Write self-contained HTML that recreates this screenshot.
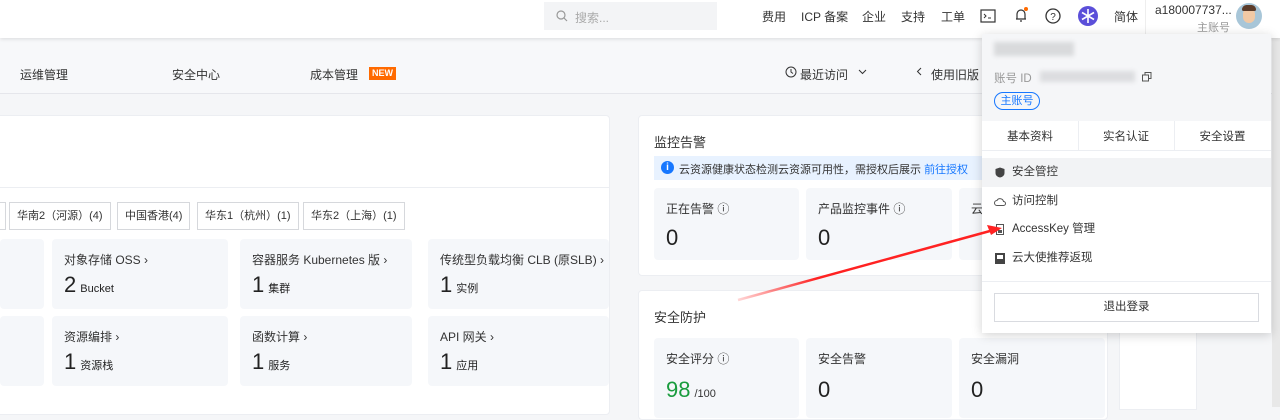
<!DOCTYPE html>
<html><head><meta charset="utf-8"><style>
*{box-sizing:border-box;margin:0;padding:0}
body{width:1280px;height:407px;overflow:hidden;background:#f5f6f8;font-family:"Liberation Sans","Noto Sans CJK SC",sans-serif;font-size:12px;color:#333;position:relative}
.a{position:absolute}
.top{left:0;top:0;width:1280px;height:38px;background:#fff;box-shadow:0 1px 4px rgba(0,0,0,.12);z-index:3}
.nav{top:8px;font-size:12px;color:#333}
.sub{left:0;top:38px;width:1280px;height:56px;background:#f7f8fa;border-bottom:1px solid #e5e6eb}
.card{background:#fff;border:1px solid #eceef2;border-radius:4px}
.tag{top:202px;height:28px;border:1px solid #d6d8dc;background:#fff;font-size:11px;line-height:26px;padding:0 7px;color:#333}
.pc{background:#f5f7fa;border-radius:4px}
.pc .t{position:absolute;left:12px;top:12px;font-size:12px;color:#333}
.pc .n{position:absolute;left:12px;top:33px;font-size:22px;color:#222}
.pc .n small{font-size:11px;margin-left:4px}
.dd{left:982px;top:34px;width:289px;height:299px;background:#fff;box-shadow:0 2px 10px rgba(0,0,0,.18);z-index:4}
.mi{left:0;width:289px;height:29px;line-height:29px;padding-left:30px;font-size:11.5px;color:#333}
</style></head><body>
<div class="a top">
 <div class="a" style="left:544px;top:2px;width:173px;height:28px;background:#f3f4f6;"></div>
 <svg class="a" style="left:556px;top:10px" width="12" height="12" viewBox="0 0 12 12"><circle cx="5" cy="5" r="4" fill="none" stroke="#999" stroke-width="1.2"/><path d="M8 8l3 3" stroke="#999" stroke-width="1.2"/></svg>
 <div class="a" style="left:575px;top:9px;color:#aaa;font-size:12px">搜索...</div>
 <div class="a nav" style="left:762px">费用</div>
 <div class="a nav" style="left:801px">ICP 备案</div>
 <div class="a nav" style="left:862px">企业</div>
 <div class="a nav" style="left:901px">支持</div>
 <div class="a nav" style="left:941px">工单</div>
 <svg class="a" style="left:980px;top:9px" width="16" height="14" viewBox="0 0 16 14"><rect x="1" y="1" width="14" height="12" fill="none" stroke="#333" stroke-width="1.2"/><path d="M4 5l2 2-2 2M8 9h3" stroke="#333" fill="none"/></svg>
 <svg class="a" style="left:1014px;top:7px" width="14" height="16" viewBox="0 0 14 16"><path d="M3 12V7a4 4 0 018 0v5zM2 12h10M6 14h2" stroke="#333" fill="none" stroke-width="1.2"/><circle cx="12" cy="2" r="2" fill="#ff6a00"/></svg>
 <svg class="a" style="left:1045px;top:8px" width="16" height="16" viewBox="0 0 16 16"><circle cx="8" cy="8" r="7" fill="none" stroke="#333" stroke-width="1.3"/><text x="8" y="12" font-size="10" text-anchor="middle" fill="#333" font-family="Liberation Sans">?</text></svg>
 <svg class="a" style="left:1078px;top:6px" width="20" height="20" viewBox="0 0 20 20"><circle cx="10" cy="10" r="10" fill="#5b4fd9"/><path d="M10 3v14M4 6.5l12 7M16 6.5l-12 7" stroke="#fff" stroke-width="1.6"/></svg>
 <div class="a nav" style="left:1114px">简体</div>
 <div class="a" style="left:1145px;top:0;width:1px;height:38px;background:#eee"></div>
 <div class="a" style="left:1155px;top:3px;font-size:12px;color:#333">a180007737...</div>
 <div class="a" style="left:1197px;top:19px;font-size:11px;color:#999">主账号</div>
 <div class="a" style="left:1236px;top:3px;width:26px;height:26px;border-radius:50%;background:#a8c6d8;overflow:hidden"><div class="a" style="left:7px;top:5px;width:12px;height:15px;border-radius:6px;background:#f1c9a5"></div><div class="a" style="left:6px;top:2px;width:14px;height:6px;border-radius:6px 6px 2px 2px;background:#5a3b2a"></div></div>
</div>
<div class="a sub">
 <div class="a" style="left:20px;top:28px;font-size:12px">运维管理</div>
 <div class="a" style="left:172px;top:28px;font-size:12px">安全中心</div>
 <div class="a" style="left:310px;top:28px;font-size:12px">成本管理</div>
 <div class="a" style="left:369px;top:29px;background:#ff6a00;color:#fff;font-size:9px;font-weight:bold;padding:1px 3px;line-height:11px">NEW</div>
 <svg class="a" style="left:785px;top:28px" width="12" height="12" viewBox="0 0 12 12"><circle cx="6" cy="6" r="5" fill="none" stroke="#333"/><path d="M6 3v3l2 1.5" stroke="#333" fill="none"/></svg>
 <div class="a" style="left:800px;top:28px">最近访问</div>
 <svg class="a" style="left:858px;top:31px" width="9" height="6"><path d="M1 1l3.5 3.5L8 1" stroke="#333" fill="none"/></svg>
 <svg class="a" style="left:916px;top:29px" width="6" height="9"><path d="M5 1L1.5 4.5 5 8" stroke="#333" fill="none"/></svg>
 <div class="a" style="left:931px;top:28px">使用旧版</div>
</div>
<div class="a card" style="left:-5px;top:115px;width:615px;height:300px"></div>
<div class="a" style="left:0;top:187px;width:609px;height:1px;background:#eceef2"></div>
<div class="a tag" style="left:-10px;width:13px"></div>
<div class="a tag" style="left:9px">华南2（河源）(4)</div>
<div class="a tag" style="left:117px">中国香港(4)</div>
<div class="a tag" style="left:197px">华东1（杭州）(1)</div>
<div class="a tag" style="left:303px">华东2（上海）(1)</div>
<div class="a pc" style="left:0;top:239px;width:44px;height:70px"></div>
<div class="a pc" style="left:52px;top:239px;width:176px;height:70px"><div class="t">对象存储 OSS ›</div><div class="n">2<small>Bucket</small></div></div>
<div class="a pc" style="left:240px;top:239px;width:172px;height:70px"><div class="t">容器服务 Kubernetes 版 ›</div><div class="n">1<small>集群</small></div></div>
<div class="a pc" style="left:428px;top:239px;width:181px;height:70px"><div class="t">传统型负载均衡 CLB (原SLB) ›</div><div class="n">1<small>实例</small></div></div>
<div class="a pc" style="left:0;top:316px;width:44px;height:70px"></div>
<div class="a pc" style="left:52px;top:316px;width:176px;height:70px"><div class="t">资源编排 ›</div><div class="n">1<small>资源栈</small></div></div>
<div class="a pc" style="left:240px;top:316px;width:172px;height:70px"><div class="t">函数计算 ›</div><div class="n">1<small>服务</small></div></div>
<div class="a pc" style="left:428px;top:316px;width:181px;height:70px"><div class="t">API 网关 ›</div><div class="n">1<small>应用</small></div></div>

<div class="a card" style="left:638px;top:115px;width:480px;height:161px"></div>
<div class="a" style="left:654px;top:132px;font-size:13px">监控告警</div>
<div class="a" style="left:654px;top:156px;width:330px;height:24px;background:#e8f2ff"></div>
<div class="a" style="left:661px;top:161px;width:13px;height:13px;border-radius:50%;background:#1677ff;color:#fff;font-size:10px;text-align:center;line-height:13px;font-weight:bold">i</div>
<div class="a" style="left:679px;top:161px;font-size:11px">云资源健康状态检测云资源可用性，需授权后展示 <span style="color:#1677ff">前往授权</span></div>
<div class="a pc" style="left:654px;top:188px;width:145px;height:72px"><div class="t">正在告警 ⓘ</div><div class="n" style="top:37px">0</div></div>
<div class="a pc" style="left:806px;top:188px;width:146px;height:72px"><div class="t">产品监控事件 ⓘ</div><div class="n" style="top:37px">0</div></div>
<div class="a pc" style="left:959px;top:188px;width:40px;height:72px"><div class="t">云</div></div>
<div class="a card" style="left:638px;top:290px;width:470px;height:130px"></div>
<div class="a" style="left:654px;top:307px;font-size:13px">安全防护</div>
<div class="a pc" style="left:654px;top:338px;width:145px;height:80px"><div class="t">安全评分 ⓘ</div><div class="n" style="top:39px;color:#1a9c3e">98<small style="color:#333">/100</small></div></div>
<div class="a pc" style="left:806px;top:338px;width:146px;height:80px"><div class="t">安全告警</div><div class="n" style="top:39px">0</div></div>
<div class="a pc" style="left:959px;top:338px;width:146px;height:80px"><div class="t">安全漏洞</div><div class="n" style="top:39px">0</div></div>
<div class="a" style="left:1119px;top:290px;width:78px;height:120px;background:#fff;border:1px solid #eceef2"></div>
<div class="a" style="left:1272px;top:0;width:8px;height:407px;background:#e8e8e8"></div>

<div class="a dd">
 <div class="a" style="left:0;top:0;width:289px;height:87px;background:#f5f6f8"></div>
 <div class="a" style="left:12px;top:8px;width:80px;height:14px;background:#d9dadc;filter:blur(2px)"></div>
 <div class="a" style="left:12px;top:36px;font-size:11.5px;color:#999">账号 ID</div>
 <div class="a" style="left:58px;top:37px;width:95px;height:11px;background:#dcdde0;filter:blur(2px)"></div>
 <svg class="a" style="left:160px;top:38px" width="10" height="10"><rect x="0.5" y="3" width="6" height="6" fill="none" stroke="#555"/><path d="M3 3V0.5h6v6H6.5" fill="none" stroke="#555"/></svg>
 <div class="a" style="left:12px;top:58px;width:46px;height:18px;border:1px solid #1677ff;border-radius:9px;color:#1677ff;font-size:11px;text-align:center;line-height:16px">主账号</div>
 <div class="a" style="left:0;top:87px;width:289px;height:30px;border-bottom:1px solid #eceef2"></div>
 <div class="a" style="left:96px;top:87px;width:1px;height:30px;background:#eceef2"></div>
 <div class="a" style="left:192px;top:87px;width:1px;height:30px;background:#eceef2"></div>
 <div class="a" style="left:0;top:94px;width:96px;text-align:center;font-size:11.5px">基本资料</div>
 <div class="a" style="left:96px;top:94px;width:96px;text-align:center;font-size:11.5px">实名认证</div>
 <div class="a" style="left:192px;top:94px;width:97px;text-align:center;font-size:11.5px">安全设置</div>
 <div class="a mi" style="top:124px;background:#f2f3f5">安全管控</div>
 <div class="a mi" style="top:153px">访问控制</div>
 <div class="a mi" style="top:181px">AccessKey 管理</div>
 <div class="a mi" style="top:210px">云大使推荐返现</div>
 <svg class="a" style="left:13px;top:133px" width="10" height="11"><path d="M5 0.5L9.5 2v4c0 2.5-2 4-4.5 4.5C2.5 10 .5 8.5.5 6V2z" fill="#444"/></svg>
 <svg class="a" style="left:12px;top:163px" width="12" height="9"><path d="M3 8.5a2.5 2.5 0 010-5 3.5 3.5 0 016.5 1 2 2 0 010 4z" fill="none" stroke="#555"/></svg>
 <svg class="a" style="left:14px;top:190px" width="8" height="11"><rect x="0.5" y="0.5" width="7" height="10" fill="none" stroke="#555"/><rect x="2" y="6" width="4" height="3" fill="#555"/></svg>
 <svg class="a" style="left:13px;top:219px" width="10" height="11"><rect width="10" height="11" fill="#444"/><rect x="2" y="2" width="6" height="4" fill="#fff"/></svg>
 <div class="a" style="left:0;top:247px;width:289px;height:1px;background:#eceef2"></div>
 <div class="a" style="left:12px;top:259px;width:265px;height:29px;border:1px solid #d9dbe0;text-align:center;line-height:27px;font-size:11.5px">退出登录</div>
</div>
<svg class="a" style="left:0;top:0;z-index:5" width="1280" height="407"><defs><linearGradient id="g" x1="738" y1="300" x2="1000" y2="228" gradientUnits="userSpaceOnUse"><stop offset="0" stop-color="#f33" stop-opacity="0.2"/><stop offset="0.3" stop-color="#f22"/><stop offset="1" stop-color="#f22"/></linearGradient></defs><path d="M738 300L990 231" stroke="url(#g)" stroke-width="2.5"/><path d="M1002 228l-15-3 4 10z" fill="#f22"/></svg>
</body></html>
